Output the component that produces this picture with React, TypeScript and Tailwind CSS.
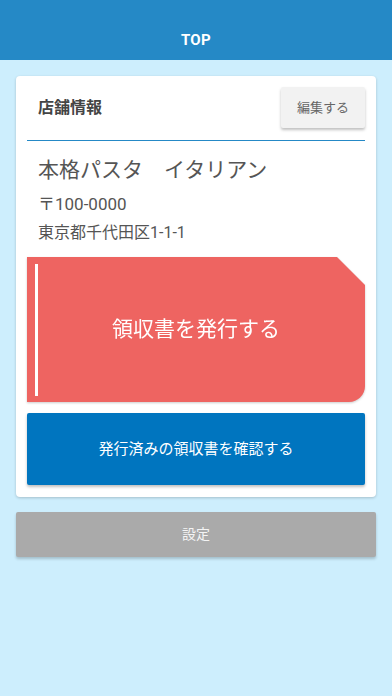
const font = { fontFamily: '"Roboto", "Noto Sans CJK JP", sans-serif' };

export default function App() {
  return (
    <div className="w-[392px] h-[696px] bg-[#cdeefd] flex flex-col" style={font}>
      {/* header */}
      <header className="h-[60px] bg-[#2589c6] flex items-end justify-center pb-[9px]">
        <span className="text-white text-[15px] font-bold tracking-wide">TOP</span>
      </header>

      <div className="px-4 pt-4 flex flex-col">
        {/* card */}
        <div className="bg-white rounded-[4px] shadow-[0_1px_3px_rgba(0,0,0,0.2)] px-[11px] pt-[11px] pb-[12px] flex flex-col">
          <div className="flex items-center justify-between pl-[11px] pb-[12px] border-b border-[#2589c6]">
            <span className="text-[16px] font-bold text-[#444]">店舗情報</span>
            <button className="w-[84px] h-[41px] bg-[#f2f2f2] rounded-[2px] shadow-[0_2px_3px_rgba(0,0,0,0.25)] text-[13px] text-[#666]">
              編集する
            </button>
          </div>

          <div className="pl-[11px] pt-[14px] text-[#555] flex flex-col">
            <span className="text-[21px] leading-[30px]">本格パスタ　イタリアン</span>
            <span className="text-[17px] leading-[24px] mt-[7px]">〒100-0000</span>
            <span className="text-[16px] leading-[24px] mt-[5px]">東京都千代田区1-1-1</span>
          </div>

          {/* issue receipt */}
          <div className="mt-[12px] drop-shadow-[0_1px_1px_rgba(0,0,0,0.2)]">
            <button className="relative w-full h-[145px] bg-[#ee6461] rounded-br-[16px] [clip-path:polygon(0_0,calc(100%-28px)_0,100%_28px,100%_100%,0_100%)] flex items-center justify-center">
              <span className="absolute left-[8px] top-[7px] bottom-[6px] w-[3px] bg-white" />
              <span className="text-white text-[21px]">領収書を発行する</span>
            </button>
          </div>

          <button className="mt-[11px] h-[72px] bg-[#0075bf] rounded-[2px] shadow-[0_2px_3px_rgba(0,0,0,0.25)] text-white text-[15px]">
            発行済みの領収書を確認する
          </button>
        </div>

        <button className="mt-[15px] h-[45px] bg-[#aaaaaa] rounded-[2px] shadow-[0_2px_3px_rgba(0,0,0,0.2)] text-[#f4f4f4] text-[14px]">
          設定
        </button>
      </div>
    </div>
  );
}
